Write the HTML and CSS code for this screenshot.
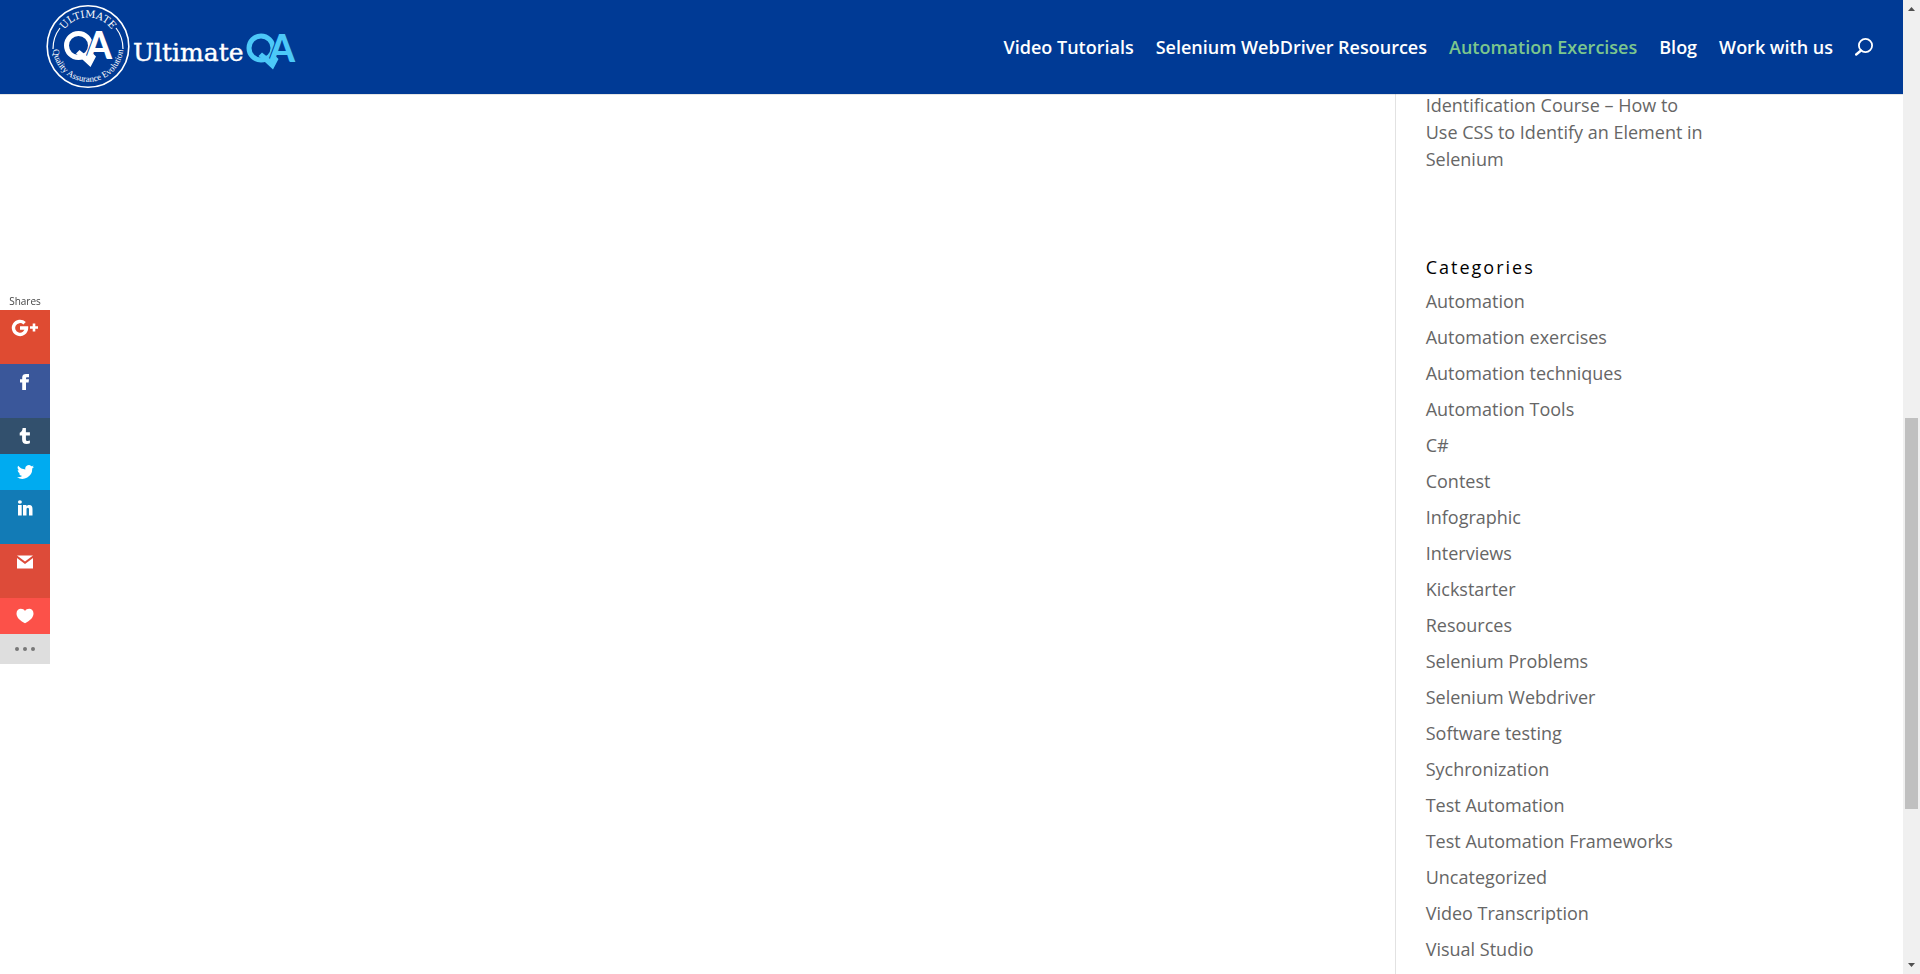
FILE: index.html
```html
<!DOCTYPE html>
<html lang="en">
<head>
<meta charset="utf-8">
<title>Automation Exercises - Ultimate QA</title>
<link rel="stylesheet" href="styles.css">
</head>
<body>
<div class="page">
  <header class="header">
    <a class="logo" href="#" aria-label="Ultimate QA">
      <svg class="logo-art" width="256" height="94" viewBox="44 0 256 94">
        <defs>
          <path id="arc-top" d="M59 46.500a29 29 0 0 1 58 0"/>
          <path id="arc-bottom" d="M53 42a35.300 35.300 0 1 0 70 0"/>
        </defs>
        <g fill="none" stroke="#fff">
          <circle cx="88" cy="46.500" r="40.800" stroke-width="1.600"/>
          <path d="M60 28Q53 37 53 49M116 28Q123 37 123 49" stroke-width="1.200"/>
        </g>
        <g fill="#fff" text-anchor="middle">
          <text class="seal-top"><textPath href="#arc-top" startOffset="50%">ULTIMATE</textPath></text>
          <text class="seal-bottom"><textPath href="#arc-bottom" startOffset="50%">Quality Assurance Evolution</textPath></text>
        </g>
        <g fill="#fff" stroke="#fff">
          <circle cx="78.500" cy="45.500" r="12" fill="none" stroke-width="5"/>
          <text class="mark" x="86" y="59">A</text>
          <path d="M76 53.500l3.500-3.500 10.500 8.500 3-5 3 3-5.500 10.500z" stroke="none"/>
        </g>
        <text class="wordmark" x="133" y="61">Ultimate</text>
        <g fill="#4cc8f8" stroke="#4cc8f8">
          <circle cx="261" cy="48" r="12" fill="none" stroke-width="5"/>
          <text class="mark" x="269" y="62">A</text>
          <path d="M258.500 56l3.500-3.500 10.500 8.500 3-5 3 3-5.500 10.500z" stroke="none"/>
        </g>
      </svg>
    </a>
    <nav class="nav">
      <a href="#">Video Tutorials</a>
      <a href="#">Selenium WebDriver Resources</a>
      <a class="current" href="#">Automation Exercises</a>
      <a href="#">Blog</a>
      <a href="#">Work with us</a>
      <button class="search" type="button" aria-label="Search">
        <svg width="18" height="18" viewBox="0 0 18 18" fill="none" stroke="#fff"><circle cx="10.500" cy="7.500" r="6.600" stroke-width="1.800"/><path d="M6 12.500L1.200 16.500" stroke-width="2.400" stroke-linecap="round"/></svg>
      </button>
    </nav>
  </header>

  <main class="container">
    <div class="content"></div>
    <aside class="sidebar">
      <section class="widget">
        <a href="#">Identification Course – How to Use CSS to Identify an Element in Selenium</a>
      </section>
      <section class="widget">
        <h4>Categories</h4>
        <ul>
          <li><a href="#">Automation</a></li>
          <li><a href="#">Automation exercises</a></li>
          <li><a href="#">Automation techniques</a></li>
          <li><a href="#">Automation Tools</a></li>
          <li><a href="#">C#</a></li>
          <li><a href="#">Contest</a></li>
          <li><a href="#">Infographic</a></li>
          <li><a href="#">Interviews</a></li>
          <li><a href="#">Kickstarter</a></li>
          <li><a href="#">Resources</a></li>
          <li><a href="#">Selenium Problems</a></li>
          <li><a href="#">Selenium Webdriver</a></li>
          <li><a href="#">Software testing</a></li>
          <li><a href="#">Sychronization</a></li>
          <li><a href="#">Test Automation</a></li>
          <li><a href="#">Test Automation Frameworks</a></li>
          <li><a href="#">Uncategorized</a></li>
          <li><a href="#">Video Transcription</a></li>
          <li><a href="#">Visual Studio</a></li>
        </ul>
      </section>
    </aside>
  </main>
</div>

<div class="shares">
  <span class="shares-label">Shares</span>
  <a class="share google tall" href="#" aria-label="Google Plus"><svg width="28" height="18" viewBox="0 0 28 18" fill="none" stroke="#fff"><path d="M13.600 4.300A6.500 6.500 0 1 0 15.500 9H9" stroke-width="3.400"/><path d="M23 4.500v8M19 8.500h8" stroke-width="2.600"/></svg></a>
  <a class="share facebook tall" href="#" aria-label="Facebook"><svg width="16" height="18" viewBox="0 0 16 18" fill="#fff"><path d="M5.200 17V9.500H3V6.300h2.200V4.500C5.200 2 6.700 1 9 1h3v3.200h-1.700C9.200 4.200 9 4.600 9 5.400v.9h3l-.4 3.200H9V17z"/></svg></a>
  <a class="share tumblr" href="#" aria-label="Tumblr"><svg width="16" height="18" viewBox="0 0 16 18" fill="#fff"><path d="M5.600 1h3.300v4.300h4v3.200h-4v3.700c0 1.600.8 1.800 1.900 1.800.7 0 1.400-.2 2.100-.5v2.800c-1 .5-2 .7-3.300.7-3 0-4.500-1.400-4.500-4.200V8.500H2.700V5.700C4.700 5 5.400 3.500 5.600 1z"/></svg></a>
  <a class="share twitter" href="#" aria-label="Twitter"><svg width="17" height="17" viewBox="0 0 24 24" fill="#fff"><path d="M24 4.600a10 10 0 0 1-2.800.8 5 5 0 0 0 2.100-2.700 10 10 0 0 1-3.100 1.200 4.900 4.900 0 0 0-8.400 4.500A14 14 0 0 1 1.700 3.200a4.900 4.900 0 0 0 1.500 6.500 5 5 0 0 1-2.200-.6c0 2.300 1.600 4.400 3.900 4.900a5 5 0 0 1-2.200.1 4.900 4.900 0 0 0 4.600 3.400A10 10 0 0 1 0 19.500 14 14 0 0 0 21.500 7.100 10 10 0 0 0 24 4.600z"/></svg></a>
  <a class="share linkedin tall" href="#" aria-label="LinkedIn"><svg width="16" height="16" viewBox="0 0 16 16" fill="#fff"><ellipse cx="2.900" cy="2" rx="2" ry="1.700"/><path d="M1 5h3.700v10.500H1zM6 5h3.500v1.400C10.200 5.400 11.200 5 12.300 5c2.300 0 3.200 1.600 3.200 4v6.500H12V9.600c0-1.100-.3-1.800-1.200-1.800-.9 0-1.300.8-1.300 1.800v5.900H6z"/></svg></a>
  <a class="share gmail tall" href="#" aria-label="Gmail"><svg width="16" height="14" viewBox="0 0 16 14" fill="#fff"><path d="M0 .5h16L8 6.500zM0 3l8 6 8-6v10.500H0z"/></svg></a>
  <a class="share like" href="#" aria-label="Like"><svg width="18" height="16" viewBox="0 0 18 16" fill="#fff"><path d="M9 15.300C4 12.700.5 9.500.5 5.500.5 2.500 2.400.8 4.800.8 6.600.8 8.200 1.600 9 3c.8-1.400 2.400-2.200 4.200-2.200 2.400 0 4.300 1.700 4.300 4.700 0 4-3.500 7.200-8.500 9.800z"/></svg></a>
  <button class="share more" type="button" aria-label="More networks"><svg width="20" height="4" viewBox="0 0 20 4" fill="#777"><circle cx="2" cy="2" r="2"/><circle cx="10" cy="2" r="2"/><circle cx="18" cy="2" r="2"/></svg></button>
</div>

<div class="scrollbar" aria-hidden="true">
  <svg class="scroll-arrow" width="7" height="4" viewBox="0 0 7 4"><path d="M3.500 0L7 4H0z" fill="#505050"/></svg>
  <div class="scroll-track"><div class="scroll-thumb"></div></div>
  <svg class="scroll-arrow" width="7" height="4" viewBox="0 0 7 4"><path d="M0 0h7L3.500 4z" fill="#505050"/></svg>
</div>
</body>
</html>
```
FILE: styles.css
```css
* { box-sizing: border-box; }

body {
  margin: 0;
  display: flex;
  height: 100vh;
  overflow: hidden;
  background: #fff;
  color: #666;
  font: 18px/27px "Open Sans", "Noto Sans", sans-serif;
}

a { color: inherit; text-decoration: none; }
button { border: 0; padding: 0; background: none; cursor: pointer; }
svg { display: block; }

.page {
  flex: 1;
  min-width: 0;
  overflow: hidden;
}

/* Header */
.header {
  position: relative;
  z-index: 2;
  display: flex;
  align-items: center;
  justify-content: space-between;
  height: 94px;
  padding: 0 30px 0 44px;
  background: #003a95;
  box-shadow: 0 1px 0 rgba(0, 0, 0, 0.1);
}

.seal-top { font: 10px "DejaVu Serif", serif; }
.seal-bottom { font: 9px "Liberation Serif", serif; }

.mark {
  font: 900 37px Lato, sans-serif;
  paint-order: stroke;
  stroke: #003a95;
  stroke-width: 2px;
}

.wordmark {
  font: 25px "DejaVu Serif", serif;
  fill: #fff;
  stroke: #fff;
  stroke-width: 0.4px;
}

.nav {
  display: flex;
  align-items: center;
  gap: 22px;
  color: #fff;
  font-weight: 600;
  white-space: nowrap;
}

.current { color: #7cc68d; }

/* Main columns */
.container {
  display: flex;
  width: 80%;
  margin: -2px auto 0;
}

.content { flex: 1; }

.sidebar {
  width: 318px;
  padding-left: 30px;
  border-left: 1px solid #e2e2e2;
}

.widget {
  width: 286px;
  margin-bottom: 81px;
}

.widget h4 {
  margin: 0 0 7px;
  color: #000;
  font-size: 18px;
  font-weight: 400;
  line-height: 27px;
  letter-spacing: 2px;
}

.widget ul {
  margin: 0;
  padding: 0;
  list-style: none;
}

.widget li { margin-bottom: 9px; }

/* Floating share bar */
.shares {
  position: fixed;
  top: 292px;
  left: 0;
  z-index: 3;
  display: flex;
  flex-direction: column;
  width: 50px;
}

.shares-label {
  height: 18px;
  color: #444;
  font-size: 10px;
  line-height: 18px;
  text-align: center;
}

.share {
  display: flex;
  justify-content: center;
  height: 36px;
}

.share svg { height: 36px; }
.tall { height: 54px; }
.google { background: #df4b32; }
.facebook { background: #3a579a; }
.tumblr { background: #32506d; }
.twitter { background: #00abf0; }
.linkedin { background: #127bb6; }
.gmail { background: #dd4b39; }
.like { background: #fc5149; }
.more { height: 30px; background: #dedede; }
.more svg { height: 30px; }

/* Scrollbar */
.scrollbar {
  display: flex;
  flex-direction: column;
  align-items: center;
  width: 17px;
  padding: 7px 0;
  background: #f0f0f0;
}

.scroll-track {
  display: flex;
  flex: 1;
  flex-direction: column;
  width: 13px;
  margin: 6px 0;
}

.scroll-track::before {
  content: "";
  flex: 401;
}

.scroll-thumb {
  flex: 391;
  background: #c0c0c0;
}

.scroll-track::after {
  content: "";
  flex: 148;
}
```
